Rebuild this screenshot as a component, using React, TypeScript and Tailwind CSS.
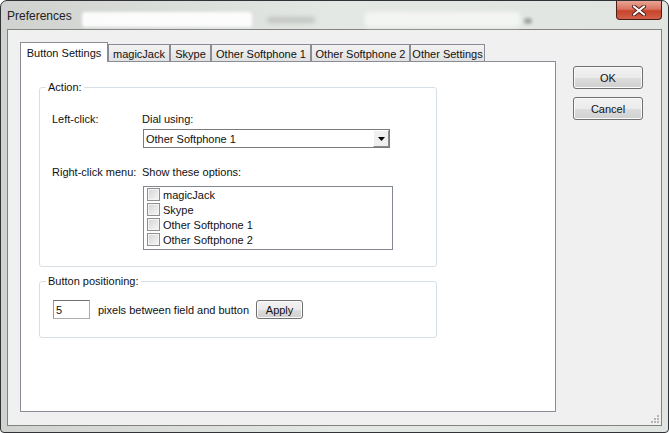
const btn =
  'border border-[#707070] rounded-[3px] bg-[linear-gradient(to_bottom,#f2f2f2_0%,#ebebeb_50%,#dddddd_51%,#cfcfcf_100%)] shadow-[inset_0_0_0_1px_#fbfbfb] flex items-center justify-center';

const tabs = [
  { label: 'magicJack', w: 'w-[62px]' },
  { label: 'Skype', w: 'w-[41px]' },
  { label: 'Other Softphone 1', w: 'w-[100px]' },
  { label: 'Other Softphone 2', w: 'w-[99px]' },
  { label: 'Other Settings', w: 'w-[75px]' },
];

const options = ['magicJack', 'Skype', 'Other Softphone 1', 'Other Softphone 2'];

function Check({ label }: { label: string }) {
  return (
    <div className="h-[15px] flex items-center pl-[3px]">
      <span className="w-[13px] h-[13px] border border-[#8f8f8f] bg-gradient-to-br from-[#d4d4d4] to-[#f7f7f7] shadow-[inset_0_0_0_1px_#f4f4f4]" />
      <span className="ml-[3px]">{label}</span>
    </div>
  );
}

export default function App() {
  return (
    <div className="w-[669px] h-[433px] bg-white font-['Liberation_Sans',Arial,sans-serif] text-[11px] leading-[14px] text-[#111]">
      <div className="w-[669px] h-[433px] border border-[#303235] rounded-t-[7px] rounded-b-[4px] bg-gradient-to-r from-[#cfd2cf] via-[#e4e8e4] to-[#e1e5e1] flex flex-col overflow-hidden">
        {/* title bar */}
        <div className="h-[28px] shrink-0 flex items-start">
          <span className="ml-[6px] mt-[8px] text-[12px] leading-[14px] text-[#222]">Preferences</span>
          <div className="ml-[10px] mt-[11px] w-[170px] h-[15px] rounded-[3px] bg-white/90 blur-[1.5px]" />
          <div className="ml-[15px] mt-[16px] w-[48px] h-[6px] rounded-full bg-[#c2c5c2] blur-[2px]" />
          <div className="ml-[50px] mt-[11px] w-[155px] h-[15px] rounded-[3px] bg-[#f3f5f3] blur-[2px]" />
          <div className="ml-[4px] mt-[17px] w-[8px] h-[6px] rounded-full bg-[#a3a6a3] blur-[1.5px]" />
          <div className="ml-auto mr-[6px] w-[46px] h-[19px] rounded-b-[4px] border border-t-0 border-[#4a1d17] bg-[linear-gradient(to_bottom,#e9a596_0%,#d9735f_45%,#c8432b_55%,#d0614a_100%)] flex items-center justify-center">
            <svg width="14" height="11" viewBox="0 0 14 11">
              <path d="M2 1.5 L12 9.5 M12 1.5 L2 9.5" stroke="#4b2019" strokeWidth="4" strokeLinecap="round" />
              <path d="M2 1.5 L12 9.5 M12 1.5 L2 9.5" stroke="#ffffff" strokeWidth="2.2" strokeLinecap="round" />
            </svg>
          </div>
        </div>

        {/* client area */}
        <div className="mx-[6px] h-[397px] shrink-0 border border-[#828282] bg-[#f0f0f0] flex">
          <div className="ml-[12px] mt-[12px] flex flex-col">
            {/* tab strip */}
            <div className="h-[19px] flex items-end">
              <div className="relative z-10 w-[88px] h-[20px] mb-[-1px] border border-b-0 border-[#898c95] bg-white flex items-start justify-center pt-[3px]">
                Button Settings
              </div>
              {tabs.map((t) => (
                <div
                  key={t.label}
                  className={`${t.w} h-[17px] border border-b-0 border-[#898c95] bg-gradient-to-b from-[#f3f3f3] to-[#e1e1e1] flex items-center justify-center pt-[1px]`}
                >
                  {t.label}
                </div>
              ))}
            </div>

            {/* tab page */}
            <div className="w-[536px] h-[351px] border border-[#898c95] bg-white flex flex-col">
              {/* Action group */}
              <div className="relative ml-[18px] mt-[25px] w-[398px] h-[180px] border border-[#d5dfe5] rounded-[3px]">
                <span className="absolute left-[6px] top-[-8px] bg-white px-[2px]">Action:</span>
                <div className="mt-[24px] pl-[12px] flex">
                  <span className="w-[90px]">Left-click:</span>
                  <div className="flex flex-col">
                    <span>Dial using:</span>
                    <div className="mt-[3px] ml-[1px] w-[247px] h-[19px] border border-[#7a7a7a] bg-white flex items-center">
                      <span className="ml-[2px] flex-1">Other Softphone 1</span>
                      <div className="w-[16px] h-[17px] border border-t-white border-l-white border-r-[#8a8a8a] border-b-[#8a8a8a] bg-[#efefef] flex items-center justify-center">
                        <svg width="7" height="4" viewBox="0 0 7 4">
                          <path d="M0 0 H7 L3.5 4 Z" fill="#000" />
                        </svg>
                      </div>
                    </div>
                  </div>
                </div>
                <div className="mt-[17px] pl-[12px] flex">
                  <span className="w-[90px]">Right-click menu:</span>
                  <div className="flex flex-col">
                    <span>Show these options:</span>
                    <div className="mt-[7px] ml-[1px] w-[250px] h-[64px] border border-[#828790] bg-white flex flex-col">
                      {options.map((o) => (
                        <Check key={o} label={o} />
                      ))}
                    </div>
                  </div>
                </div>
              </div>

              {/* Button positioning group */}
              <div className="relative ml-[18px] mt-[14px] w-[398px] h-[57px] border border-[#d5dfe5] rounded-[3px]">
                <span className="absolute left-[6px] top-[-8px] bg-white px-[2px]">Button positioning:</span>
                <div className="mt-[18px] flex items-center">
                  <div className="ml-[13px] w-[37px] h-[19px] border border-[#abadb3] border-t-[#707070] border-l-[#9a9a9a] bg-white flex items-center pl-[2px]">
                    5
                  </div>
                  <span className="ml-[8px]">pixels between field and button</span>
                  <div className={`ml-[7px] w-[47px] h-[19px] ${btn}`}>Apply</div>
                </div>
              </div>
            </div>
          </div>

          {/* right buttons */}
          <div className="flex-1 flex flex-col">
            <div className="ml-[17px] mt-[36px] flex flex-col gap-[8px]">
              <div className={`w-[70px] h-[23px] ${btn}`}>OK</div>
              <div className={`w-[70px] h-[23px] ${btn}`}>Cancel</div>
            </div>
            <div className="mt-auto self-end mr-[2px] mb-[2px]">
              <svg width="10" height="10" viewBox="0 0 10 10">
                <rect x="8" y="2" width="2" height="2" fill="#b5b5b5" />
                <rect x="5" y="5" width="2" height="2" fill="#b5b5b5" />
                <rect x="8" y="5" width="2" height="2" fill="#b5b5b5" />
                <rect x="2" y="8" width="2" height="2" fill="#b5b5b5" />
                <rect x="5" y="8" width="2" height="2" fill="#b5b5b5" />
                <rect x="8" y="8" width="2" height="2" fill="#b5b5b5" />
              </svg>
            </div>
          </div>
        </div>
      </div>
    </div>
  );
}
